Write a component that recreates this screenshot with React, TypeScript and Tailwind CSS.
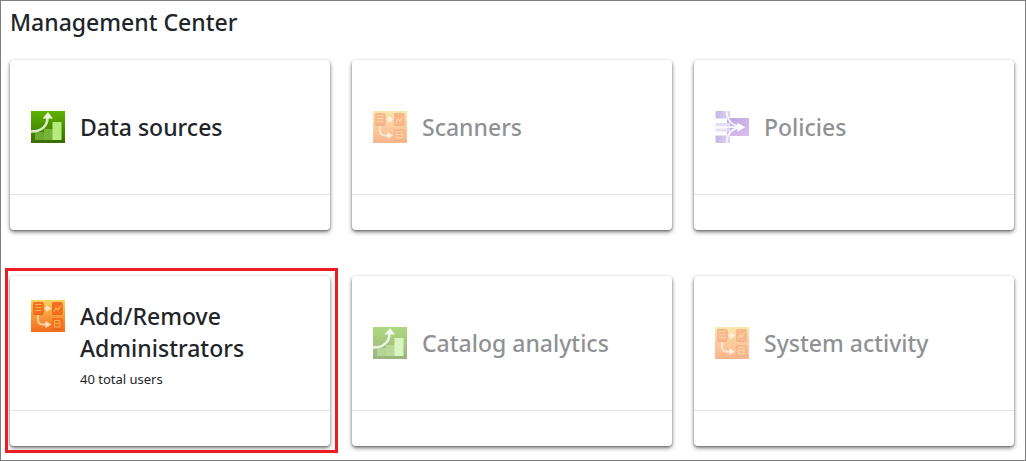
import type { ReactNode } from "react";

function GrowthIcon() {
  return (
    <svg viewBox="0 0 34 32" className="h-8 w-[34px]" aria-hidden="true">
      <defs>
        <linearGradient id="growth-bg" x1="0" y1="0" x2="0" y2="1">
          <stop offset="0" stopColor="#5db300" />
          <stop offset="1" stopColor="#396b00" />
        </linearGradient>
      </defs>
      <rect width="34" height="32" fill="url(#growth-bg)" />
      <path d="M4 21h9v-3h9v11H4z" fill="#6dab2e" />
      <path d="M13 18h9v11h-9z" fill="#76b43a" />
      <rect x="21.500" y="11" width="9" height="18" fill="#b4ec80" />
      <path d="M0 20.500C11 20.500 16.500 15 16.500 6" fill="none" stroke="#dcecca" strokeWidth="2.600" />
      <path d="M11.500 7.500L17 1l5 6.500z" fill="#e9f6dc" />
    </svg>
  );
}

function FlowIcon() {
  return (
    <svg viewBox="0 0 34 32" className="h-8 w-[34px]" aria-hidden="true">
      <defs>
        <linearGradient id="flow-bg" x1="0" y1="0" x2="0" y2="1">
          <stop offset="0" stopColor="#f8d35a" />
          <stop offset="0.5" stopColor="#f79a3a" />
          <stop offset="1" stopColor="#f36c1d" />
        </linearGradient>
      </defs>
      <rect width="34" height="32" fill="url(#flow-bg)" />
      <rect x="2" y="2.500" width="10.500" height="12.500" rx="1.500" fill="#e0661a" />
      <rect x="21" y="2.500" width="10.500" height="12.500" rx="1.500" fill="#e0661a" />
      <rect x="21" y="18.500" width="10.500" height="11.500" rx="1.500" fill="#e0661a" />
      <rect x="2" y="2" width="10.500" height="12" rx="1.500" fill="#f37021" />
      <rect x="21" y="2" width="10.500" height="12" rx="1.500" fill="#f37021" />
      <rect x="21" y="18" width="10.500" height="11" rx="1.500" fill="#f37021" />
      <path d="M4 4.500h6.500M4 7.500h6.500M4 10.500h6.500" stroke="#fbb24a" strokeWidth="1" />
      <path d="M23 11.500l2-3.500 2 2 2.500-4.500" fill="none" stroke="#fbb24a" strokeWidth="1.200" />
      <path d="M23.500 20.500h5.500v6.500h-5.500zM23.500 23.500h5.500" fill="none" stroke="#fbb24a" strokeWidth="1" />
      <path d="M13 8.500h3M7 15v4.500q0 5 5 5H15" fill="none" stroke="#fbd3a2" strokeWidth="1.800" />
      <path d="M15 5l5.500 3.500-5.500 3.500zM14.500 21l5.500 3.500-5.500 3.500z" fill="#fde3c2" />
    </svg>
  );
}

function MergeIcon() {
  return (
    <svg viewBox="0 0 34 32" className="h-8 w-[34px]" aria-hidden="true">
      <defs>
        <linearGradient id="merge-small" x1="0" y1="0" x2="1" y2="0">
          <stop offset="0" stopColor="#8974d0" />
          <stop offset="1" stopColor="#c4a4e8" />
        </linearGradient>
        <linearGradient id="merge-large" x1="0" y1="0" x2="1" y2="1">
          <stop offset="0" stopColor="#7355c7" />
          <stop offset="1" stopColor="#bf7fdb" />
        </linearGradient>
      </defs>
      <rect x="0.500" width="14.500" height="7.500" rx="1" fill="url(#merge-small)" />
      <rect x="0.500" y="24.500" width="14.500" height="7.500" rx="1" fill="url(#merge-small)" />
      <rect x="12" y="7" width="22" height="18" rx="0.500" fill="url(#merge-large)" />
      <path d="M0.500 12H15v3H0.500zM0.500 17.500H15v3H0.500z" fill="#cdbdea" />
      <path d="M11.500 0C12 8 15 13.500 23 15M11.500 32C12 24 15 18.500 23 17M0.500 16.200h24" fill="none" stroke="#f4effb" strokeWidth="1.800" />
      <path d="M22 11.500l8 4.700-8 4.700 1.500-4.700z" fill="#fff" />
    </svg>
  );
}

type Tile = {
  title: string;
  icon: ReactNode;
  detail?: string;
  disabled?: boolean;
  highlighted?: boolean;
};

const tiles: Tile[] = [
  { title: "Data sources", icon: <GrowthIcon /> },
  { title: "Scanners", icon: <FlowIcon />, disabled: true },
  { title: "Policies", icon: <MergeIcon />, disabled: true },
  { title: "Add/Remove Administrators", icon: <FlowIcon />, detail: "40 total users", highlighted: true },
  { title: "Catalog analytics", icon: <GrowthIcon />, disabled: true },
  { title: "System activity", icon: <FlowIcon />, disabled: true },
];

function TileCard({ title, icon, detail, disabled, highlighted }: Tile) {
  return (
    <li className="relative">
      <button
        type="button"
        disabled={disabled}
        className="flex w-full flex-col rounded-[4px] bg-white text-left text-[#212529] shadow-[0_2px_4px_rgba(0,0,0,0.5),0_1px_2px_rgba(0,0,0,0.25)]"
      >
        <span className={disabled ? "flex min-h-[134px] w-full items-center px-[21px] opacity-50" : "flex min-h-[134px] w-full items-center px-[21px]"}>
          <span className="flex items-start gap-[15px]">
            <span className="shrink-0">{icon}</span>
            <span className="flex flex-col gap-2">
              <span className="text-[23px] leading-8 font-medium">{title}</span>
              {detail && <span className="text-[13px] leading-[14px]">{detail}</span>}
            </span>
          </span>
        </span>
        <span className="h-9 w-full border-t border-[#e3e3e3]" />
      </button>
      {highlighted && (
        <span className="pointer-events-none absolute -top-2 -right-2 -bottom-[7px] -left-[5px] border-3 border-[#ed1c24]" />
      )}
    </li>
  );
}

export default function App() {
  return (
    <main className="min-h-screen border border-[#7f7f7f] bg-white pr-[11px] pl-[9px] font-['Noto_Sans','Open_Sans',sans-serif] text-[#212529]">
      <h1 className="pt-[5px] text-[23px] leading-8 font-medium">Management Center</h1>
      <ul className="mt-[22px] grid grid-cols-3 gap-x-[22px] gap-y-[46px] pb-[13px]">
        {tiles.map((tile) => (
          <TileCard key={tile.title} {...tile} />
        ))}
      </ul>
    </main>
  );
}
